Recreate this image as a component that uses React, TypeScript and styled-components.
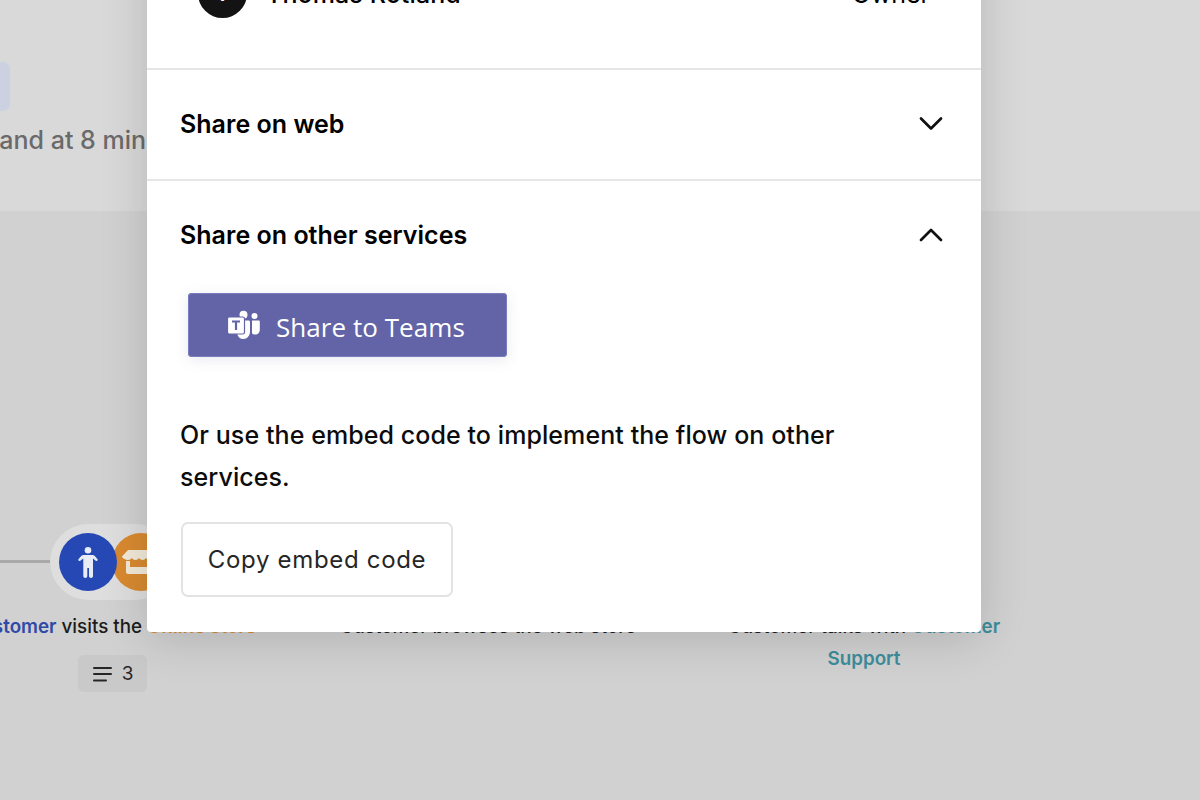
import React from "react";
import styled, { createGlobalStyle } from "styled-components";

const Global = createGlobalStyle`
  html, body { margin: 0; padding: 0; background: #d1d1d1; }
  body { font-family: Inter, "Liberation Sans", sans-serif; }
`;

const Page = styled.div`
  position: relative;
  width: 1200px;
  height: 800px;
  overflow: hidden;
  display: flex;
  flex-direction: column;
  background: #d1d1d1;
`;

const TopBand = styled.section`
  height: 211px;
  flex: none;
  background: #d9d9d9;
  box-sizing: border-box;
  padding-top: 62px;
`;

const TagChip = styled.div`
  width: 40px;
  height: 49px;
  margin-left: -30px;
  border-radius: 7px;
  background: #ccd1e2;
`;

const Fact = styled.p`
  margin: 12px 0 0;
  width: 146px;
  display: flex;
  justify-content: flex-end;
  white-space: nowrap;
  font-size: 25px;
  line-height: 34px;
  font-weight: 500;
  color: #6a6a6a;
`;

const Journey = styled.section`
  flex: 1;
  padding-top: 313px;
  margin-left: -76px;
  display: grid;
  grid-template-columns: repeat(3, 376px);
  grid-auto-rows: min-content;
`;

const Step = styled.div`
  display: flex;
  flex-direction: column;
  align-items: center;
`;

const Track = styled.div`
  position: relative;
  height: 76px;
  width: 100%;
  display: flex;
  align-items: center;
  justify-content: center;
`;

const TrackLine = styled.span`
  position: absolute;
  left: 0;
  width: 128px;
  top: 36px;
  height: 3px;
  background: #a9a9a9;
`;

const Pill = styled.div`
  position: relative;
  height: 76px;
  display: flex;
  align-items: center;
  padding: 0 4px 0 9px;
  border-radius: 38px;
  background: #dedede;
`;

const Badge = styled.div<{ $bg: string; $over?: boolean }>`
  width: 58px;
  height: 58px;
  flex: none;
  border-radius: 50%;
  display: flex;
  align-items: center;
  justify-content: center;
  background: ${(p) => p.$bg};
  margin-left: ${(p) => (p.$over ? "-5px" : "0")};
  position: relative;
  z-index: ${(p) => (p.$over ? 0 : 1)};
`;

const Caption = styled.p`
  margin: 11px 0 0;
  width: 310px;
  text-align: center;
  font-size: 18.8px;
  line-height: 32px;
  font-weight: 500;
  color: #1c1c1c;
`;

const Who = styled.span<{ $c: string }>`
  color: ${(p) => p.$c};
  font-weight: 600;
`;

const NotesChip = styled.div`
  margin-top: 12px;
  width: 69px;
  height: 37px;
  display: flex;
  align-items: center;
  justify-content: center;
  gap: 10px;
  padding-left: 2px;
  box-sizing: border-box;
  border-radius: 6px;
  background: #c9c9c9;
  font-size: 19px;
  color: #262626;
`;

const Modal = styled.div`
  position: absolute;
  left: 147px;
  top: -60px;
  width: 834px;
  height: 692px;
  background: #fff;
  border-radius: 0 0 4px 4px;
  box-shadow: 0 6px 48px rgba(0, 0, 0, 0.16);
  display: flex;
  flex-direction: column;
  color: #000;
`;

const OwnerRow = styled.div`
  height: 128px;
  flex: none;
  box-sizing: border-box;
  padding: 29px 51px 0;
  display: flex;
  align-items: flex-start;
`;

const Avatar = styled.div`
  width: 49px;
  height: 49px;
  border-radius: 50%;
  flex: none;
  background: #131313;
  color: #fff;
  font-size: 22px;
  font-weight: 600;
  line-height: 49px;
  text-align: center;
`;

const OwnerName = styled.span`
  margin: 8px 0 0 19px;
  flex: 1;
  font-size: 25px;
  line-height: 34px;
  font-weight: 500;
  letter-spacing: 0.1px;
`;

const OwnerRole = styled.span`
  margin-top: 8px;
  font-size: 25px;
  line-height: 34px;
  font-weight: 400;
`;

const Section = styled.div`
  border-top: 2px solid #e6e6e6;
  box-sizing: border-box;
  padding: 0 33px;
`;

const SectionHead = styled.div`
  height: 109px;
  box-sizing: border-box;
  padding-bottom: 2px;
  display: flex;
  align-items: center;
  justify-content: space-between;
`;

const SectionTitle = styled.h3`
  margin: 0;
  font-size: 25px;
  line-height: 32px;
  font-weight: 600;
  letter-spacing: 0.02px;
`;

const Chevron = styled.svg`
  width: 26px;
  height: 26px;
  margin-right: 4px;
  fill: none;
  stroke: #111;
  stroke-width: 2.7;
  stroke-linecap: round;
  stroke-linejoin: round;
`;

const TeamsWrap = styled.div`
  margin: 3px 0 0 8px;
  width: 319px;
  border-radius: 4px;
  box-shadow: 0 3px 14px rgba(90, 90, 140, 0.13);
`;

const TeamsButton = styled.div`
  height: 64px;
  border-radius: 4px;
  background: #6264a7;
  box-shadow: 0 0 0 1px #7a7cc0 inset;
  color: #fff;
  display: flex;
  align-items: center;
  padding-left: 39px;
  gap: 16px;
  font-family: "Open Sans", "Noto Sans", sans-serif;
  font-size: 26px;
  letter-spacing: 0.05px;
`;

const TeamsLabel = styled.span`
  margin-top: 3px;
`;

const Blurb = styled.p`
  margin: 57px 0 0;
  width: 720px;
  font-size: 25px;
  line-height: 42px;
  font-weight: 500;
  letter-spacing: 0.08px;
  color: #0c0c0c;
`;

const CopyButton = styled.button`
  margin: 24px 0 0 1px;
  width: 272px;
  height: 75px;
  box-sizing: border-box;
  border: 2px solid #e3e3e3;
  border-radius: 7px;
  background: #fff;
  font-family: inherit;
  font-size: 24px;
  font-weight: 400;
  letter-spacing: 0.68px;
  color: #262626;
  padding: 0;
`;

const PersonIcon = () => (
  <svg width="20" height="31" viewBox="0 0 20 31" fill="#e8ecf6">
    <circle cx="10" cy="3.300" r="3.300" />
    <path d="M6 8h8c1.500 0 2.400.6 3.200 1.400l2.200 2.600c1 1.200-.6 2.800-1.700 1.700L15 11.500V29c0 2.500-4 2.500-4 0V21H9.300v8c0 2.500-4 2.500-4 0V11.500L2.300 13.700c-1.100 1.100-2.700-.5-1.700-1.700l2.200-2.600C3.600 8.600 4.500 8 6 8z" />
  </svg>
);

const StoreIcon = () => (
  <svg width="38" height="24" viewBox="0 0 38 24" fill="#f3ead9">
    <path d="M6 0h26l6 6.500c0 2-1.500 3.500-3.200 3.500s-2.800-1-3.600-2c-.8 1-2 2-3.600 2s-2.800-1-3.600-2c-.8 1-2 2-3.400 2s-2.800-1-3.600-2c-.8 1-2 2-3.600 2s-2.800-1-3.600-2c-.8 1-1.900 2-3.600 2S0 8.500 0 6.500z" />
    <path d="M4 11h4v6h22v-6h4v11c0 1.100-.9 2-2 2H6c-1.100 0-2-.9-2-2z" />
  </svg>
);

const NotesIcon = () => (
  <svg width="19" height="16" viewBox="0 0 19 16" stroke="#262626" strokeWidth="2" strokeLinecap="round">
    <path d="M1 2h17M1 8h17M1 14.500h12" />
  </svg>
);

const TeamsIcon = () => (
  <svg width="33" height="30" viewBox="0 0 33 30">
    <circle cx="16.500" cy="4.800" r="4" fill="#fff" />
    <circle cx="27.500" cy="6" r="3" fill="#fff" />
    <path d="M12 10.500h9.500c.8 0 1.500.7 1.500 1.500v9.500c0 4-3 7.500-6.500 7.500-3.200 0-5.600-2-6.300-5V12z" fill="#fff" />
    <path d="M25 10.500h6.500c.8 0 1.300.5 1.300 1.300v7.700c0 3-2 5-4.500 5-1.500 0-2.800-.4-3.300-1.200z" fill="#fff" />
    <rect x="0.500" y="7" width="17" height="17" rx="1.800" fill="#fff" stroke="#6264a7" strokeWidth="1.200" />
    <path d="M5 11.500h8M9 11.500v8.500" stroke="#6264a7" strokeWidth="2.200" fill="none" />
  </svg>
);

export default function App() {
  return (
    <>
      <Global />
      <Page>
        <TopBand>
          <TagChip />
          <Fact>and at 8 min</Fact>
        </TopBand>
        <Journey>
          <Step>
            <Track>
              <TrackLine />
              <Pill>
                <Badge $bg="#2548b5">
                  <PersonIcon />
                </Badge>
                <Badge $bg="#d98a30" $over>
                  <StoreIcon />
                </Badge>
              </Pill>
            </Track>
            <Caption>
              <Who $c="#2f49a8">Customer</Who> visits the <Who $c="#d98a30">Online store</Who>
            </Caption>
            <NotesChip>
              <NotesIcon />3
            </NotesChip>
          </Step>
          <Step>
            <Track />
            <Caption>Customer browses the web store</Caption>
          </Step>
          <Step>
            <Track />
            <Caption>
              Customer talks with <Who $c="#3d8d9c">Customer Support</Who>
            </Caption>
          </Step>
        </Journey>
        <Modal>
          <OwnerRow>
            <Avatar>T</Avatar>
            <OwnerName>Thomas Rotland</OwnerName>
            <OwnerRole>Owner</OwnerRole>
          </OwnerRow>
          <Section>
            <SectionHead>
              <SectionTitle>Share on web</SectionTitle>
              <Chevron viewBox="0 0 26 26">
                <path d="M3 7.500l10 10 10-10" />
              </Chevron>
            </SectionHead>
          </Section>
          <Section>
            <SectionHead>
              <SectionTitle>Share on other services</SectionTitle>
              <Chevron viewBox="0 0 26 26">
                <path d="M3 18l10-10 10 10" />
              </Chevron>
            </SectionHead>
            <TeamsWrap>
              <TeamsButton>
                <TeamsIcon />
                <TeamsLabel>Share to Teams</TeamsLabel>
              </TeamsButton>
            </TeamsWrap>
            <Blurb>Or use the embed code to implement the flow on other services.</Blurb>
            <CopyButton>Copy embed code</CopyButton>
          </Section>
        </Modal>
      </Page>
    </>
  );
}
